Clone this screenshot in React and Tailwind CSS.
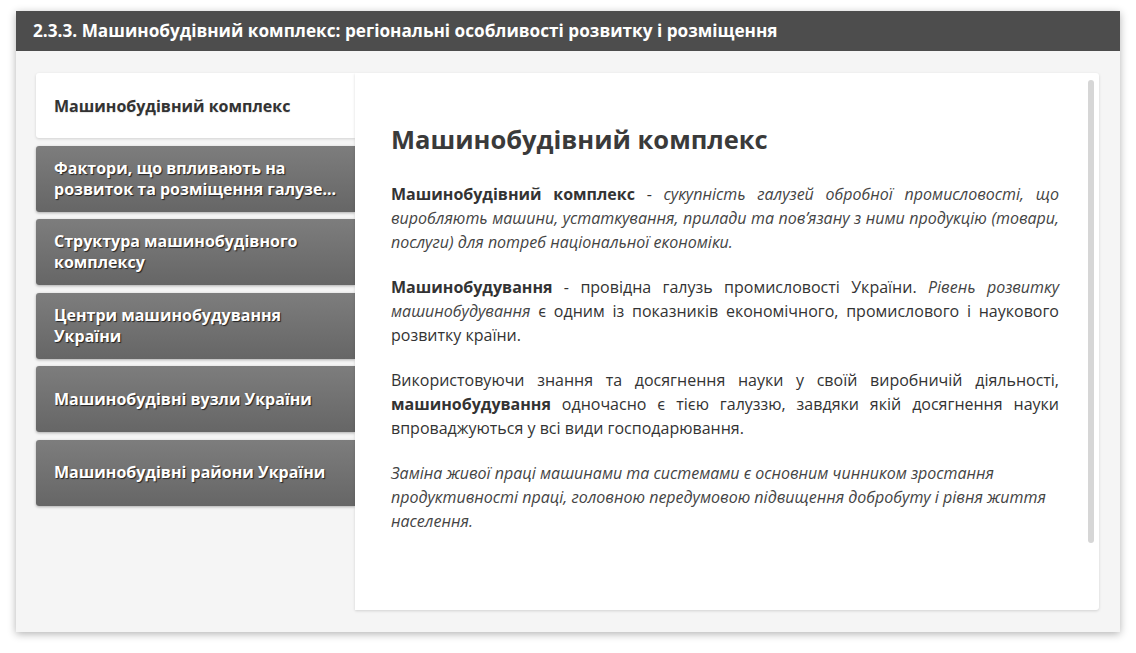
import React from 'react';

const tabs = [
  'Фактори, що впливають на розвиток та розміщення галузе...',
  'Структура машинобудівного комплексу',
  'Центри машинобудування України',
  'Машинобудівні вузли України',
  'Машинобудівні райони України',
];

export default function App() {
  return (
    <div className="w-[1136px] h-[653px] bg-white pt-[11px] pl-[16px] font-['Open_Sans',sans-serif]">
      <div className="w-[1104px] h-[621px] bg-[#f5f5f5] shadow-[0_2px_8px_rgba(0,0,0,0.3)] flex flex-col">
        {/* Header */}
        <div className="h-[40px] bg-[#4d4d4d] flex items-center pl-[17px] shrink-0">
          <span className="text-white font-bold text-[17.2px]">
            2.3.3. Машинобудівний комплекс: регіональні особливості розвитку і розміщення
          </span>
        </div>

        {/* Body */}
        <div className="flex-1 flex pt-[22px] pl-[20px] pr-[21px] pb-[22px]">
          {/* Tabs */}
          <div className="w-[319px] shrink-0 flex flex-col gap-[7.5px]">
            <div className="h-[65px] bg-white rounded-l-[3px] flex items-center pl-[18px] shadow-[0_1px_3px_rgba(0,0,0,0.15)]">
              <span className="text-[#333] font-bold text-[16px] [text-shadow:0_1px_1px_rgba(0,0,0,0.1)]">Машинобудівний комплекс</span>
            </div>
            {tabs.map((t) => (
              <div
                key={t}
                className="h-[66px] rounded-l-[3px] bg-gradient-to-b from-[#7d7d7d] to-[#666666] flex items-center pl-[18px] pr-[14px] shadow-[0_1px_3px_rgba(0,0,0,0.3)]"
              >
                <span className="text-white font-bold text-[16px] leading-[21px] [text-shadow:1px_1px_1px_rgba(0,0,0,0.7)]">{t}</span>
              </div>
            ))}
          </div>

          {/* Content */}
          <div className="flex-1 relative bg-white rounded-r-[3px] shadow-[0_1px_3px_rgba(0,0,0,0.15)] pt-[48px] pl-[36px] pr-[40px] text-[#333]">
            <div className="absolute right-[5px] top-[7px] w-[6px] h-[463px] rounded-full bg-[#d6d6d6]" />
            <h1 className="text-[25.5px] font-bold leading-[36px] text-[#3a3a3a] mb-[25px]">Машинобудівний комплекс</h1>
            <p className="text-[16px] leading-[24px] text-justify mb-[21px]">
              <b>Машинобудівний комплекс</b> - <i className="text-[#444]">сукупність галузей обробної промисловості, що виробляють машини, устаткування, прилади та пов’язану з ними продукцію (товари, послуги) для потреб національної економіки.</i>
            </p>
            <p className="text-[16px] leading-[24px] text-justify mb-[21px]">
              <b>Машинобудування</b> - провідна галузь промисловості України. <i className="text-[#444]">Рівень розвитку машинобудування</i> є одним із показників економічного, промислового і наукового розвитку країни.
            </p>
            <p className="text-[16px] leading-[24px] text-justify mb-[21px]">
              Використовуючи знання та досягнення науки у своїй виробничій діяльності, <b>машинобудування</b> одночасно є тією галуззю, завдяки якій досягнення науки впроваджуються у всі види господарювання.
            </p>
            <p className="text-[16px] leading-[24px] italic text-[#444]">
              Заміна живої праці машинами та системами є основним чинником зростання продуктивності праці, головною передумовою підвищення добробуту і рівня життя населення.
            </p>
          </div>
        </div>
      </div>
    </div>
  );
}
